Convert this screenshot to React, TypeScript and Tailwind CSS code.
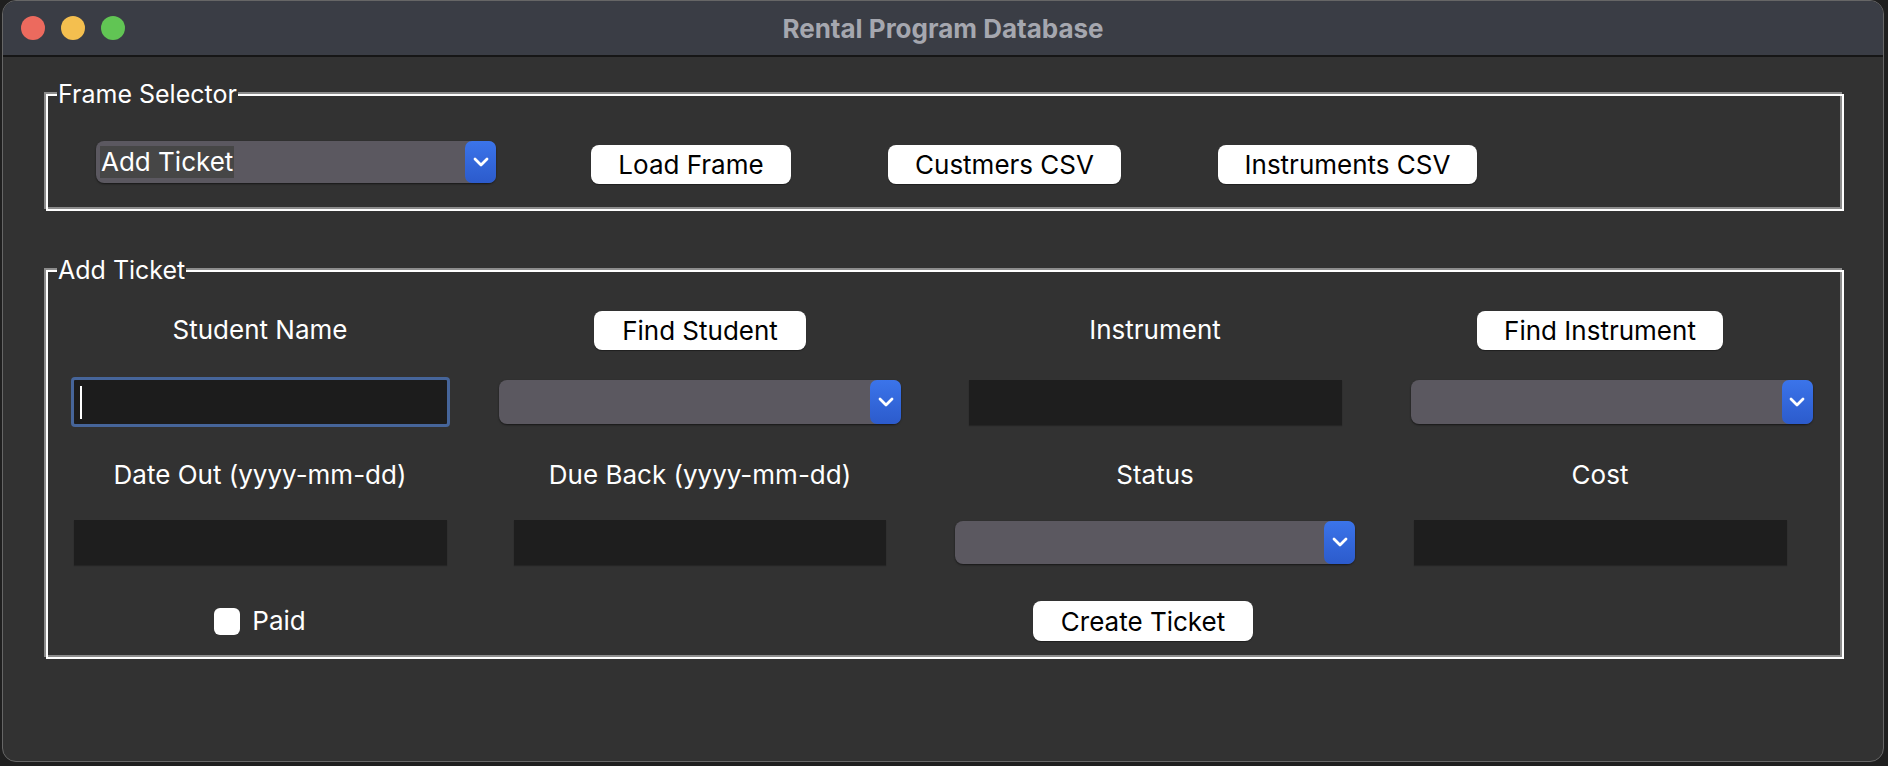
import React from "react"

function Chevron() {
  return (
    <svg width="18" height="12" viewBox="0 0 18 12" fill="none">
      <path d="M3 3L9 9L15 3" stroke="white" strokeWidth="2.8" strokeLinecap="round" strokeLinejoin="round" />
    </svg>
  )
}

function Combo({ size, text, extra = "" }: { size: string; text?: string; extra?: string }) {
  return (
    <div className={`flex ${size} ${extra} rounded-[8px] bg-[#5b5860] shadow-[0_1px_2px_rgba(0,0,0,0.55)]`}>
      <div className="flex flex-1 items-center pl-[4px]">
        {text && (
          <span className="bg-[#464646] px-[1px] text-[26px] leading-[32px] text-white">{text}</span>
        )}
      </div>
      <div className="flex w-[31px] items-center justify-center rounded-[7px] bg-gradient-to-b from-[#3b74ea] to-[#2c5bcc]">
        <Chevron />
      </div>
    </div>
  )
}

function Button({ label, size, extra = "" }: { label: string; size: string; extra?: string }) {
  return (
    <div
      className={`flex ${size} ${extra} items-center justify-center rounded-[8px] bg-white text-[26px] text-black shadow-[0_1px_1px_rgba(0,0,0,0.4)]`}
    >
      {label}
    </div>
  )
}

function Entry({ size }: { size: string }) {
  return <div className={`${size} bg-[#1e1e1e] shadow-[0_1px_1px_rgba(0,0,0,0.25)]`} />
}

function Label({ text, extra = "" }: { text: string; extra?: string }) {
  return <span className={`${extra} text-[26px] leading-none text-white`}>{text}</span>
}

function Group({ title, size, children }: { title: string; size: string; children: React.ReactNode }) {
  return (
    <div
      className={`relative ml-[43px] ${size} border-2 border-white shadow-[-2px_-2px_0_#8c8c8c,inset_-2px_-2px_0_#8c8c8c]`}
    >
      <span className="absolute -top-[17px] left-[9px] bg-[#323232] px-[1px] text-[25px] leading-[30px] text-white">
        {title}
      </span>
      {children}
    </div>
  )
}

export default function App() {
  return (
    <div className="h-[766px] w-[1888px] overflow-hidden bg-[#1f1f1f] font-['Inter',sans-serif]">
      <div className="ml-[2px] flex h-[762px] w-[1882px] flex-col overflow-hidden rounded-[14px] border border-[#666] bg-[#323232]">
        <div className="grid h-[56px] shrink-0 grid-cols-[1fr_auto_1fr] items-center border-b-2 border-[#161616] bg-[#3a3d45]">
          <div className="flex items-center gap-[16px] pl-[18px]">
            <span className="h-[24px] w-[24px] rounded-full bg-[#ec6a5e]" />
            <span className="h-[24px] w-[24px] rounded-full bg-[#f4bf4f]" />
            <span className="h-[24px] w-[24px] rounded-full bg-[#61c554]" />
          </div>
          <div className="text-[26px] font-bold text-[#a5a7af]">Rental Program Database</div>
          <div />
        </div>

        <div className="pt-[37px]">
          <Group title="Frame Selector" size="h-[117px] w-[1798px]">
            <div className="flex items-center pl-[48px] pt-[44px]">
              <Combo size="h-[42px] w-[400px]" text="Add Ticket" />
              <Button label="Load Frame" size="h-[39px] w-[200px]" extra="ml-[95px] mt-[5px]" />
              <Button label="Custmers CSV" size="h-[39px] w-[233px]" extra="ml-[97px] mt-[5px]" />
              <Button label="Instruments CSV" size="h-[39px] w-[259px]" extra="ml-[97px] mt-[5px]" />
            </div>
          </Group>
        </div>

        <div className="pt-[59px]">
          <Group title="Add Ticket" size="h-[389px] w-[1798px]">
            <div className="grid grid-cols-[424px_456px_454px_436px] grid-rows-[72px_72px_70px_68px_81px] items-center justify-items-center pt-[22px]">
              <Label text="Student Name" />
              <Button label="Find Student" size="h-[39px] w-[212px]" />
              <Label text="Instrument" />
              <Button label="Find Instrument" size="h-[39px] w-[246px]" />

              <div className="flex h-[50px] w-[379px] items-center rounded-[4px] border-[3px] border-[#46659a] bg-[#1c1c1c] pl-[6px]">
                <div className="h-[33px] w-[2px] bg-white" />
              </div>
              <Combo size="h-[44px] w-[402px]" />
              <Entry size="h-[45px] w-[373px]" />
              <Combo size="h-[44px] w-[402px]" extra="ml-[23px]" />

              <Label text="Date Out (yyyy-mm-dd)" extra="mt-[4px]" />
              <Label text="Due Back (yyyy-mm-dd)" extra="mt-[4px]" />
              <Label text="Status" extra="mt-[4px]" />
              <Label text="Cost" extra="mt-[4px]" />

              <Entry size="h-[45px] w-[373px]" />
              <Entry size="h-[45px] w-[372px]" />
              <Combo size="h-[43px] w-[400px]" />
              <Entry size="h-[45px] w-[373px]" />

              <div className="mt-[9px] flex items-center gap-[12px]">
                <span className="h-[27px] w-[26px] rounded-[6px] bg-white" />
                <span className="text-[26px] leading-none text-white">Paid</span>
              </div>
              <div />
              <Button label="Create Ticket" size="h-[40px] w-[220px]" extra="mt-[9px] mr-[24px]" />
              <div />
            </div>
          </Group>
        </div>
      </div>
    </div>
  )
}
